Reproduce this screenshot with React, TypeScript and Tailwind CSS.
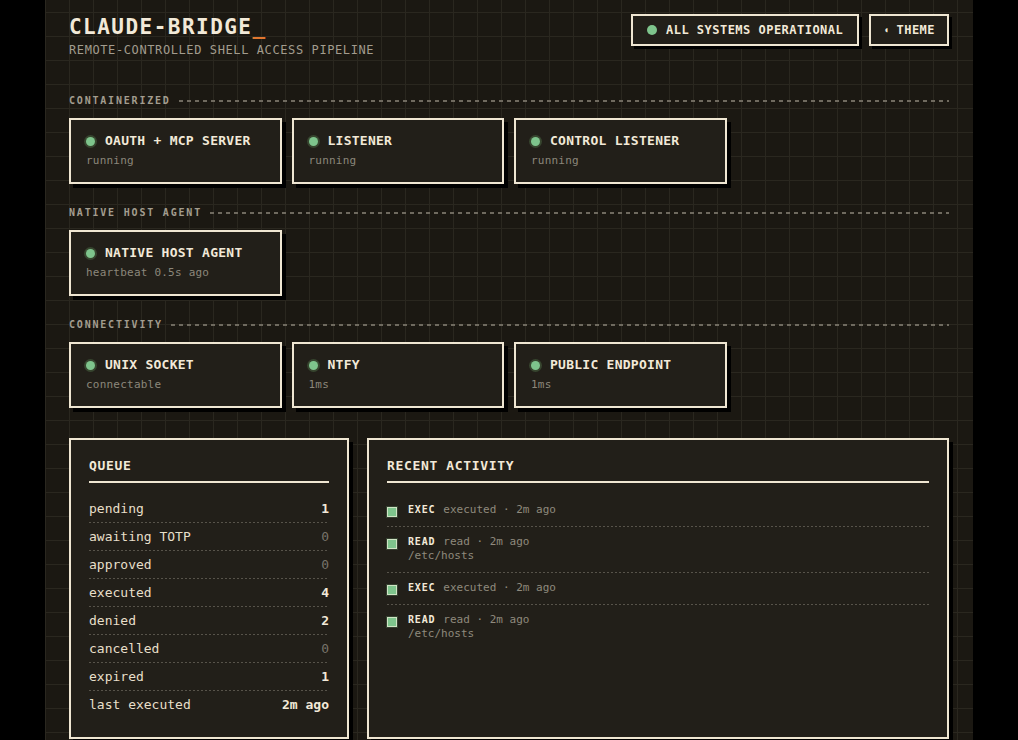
import React from 'react'

const containers = [
  { name: 'OAUTH + MCP SERVER', status: 'running' },
  { name: 'LISTENER', status: 'running' },
  { name: 'CONTROL LISTENER', status: 'running' },
]
const hostAgents = [{ name: 'NATIVE HOST AGENT', status: 'heartbeat 0.5s ago' }]
const connectivity = [
  { name: 'UNIX SOCKET', status: 'connectable' },
  { name: 'NTFY', status: '1ms' },
  { name: 'PUBLIC ENDPOINT', status: '1ms' },
]

const queue: { label: string; value: string; strong: boolean }[] = [
  { label: 'pending', value: '1', strong: true },
  { label: 'awaiting TOTP', value: '0', strong: false },
  { label: 'approved', value: '0', strong: false },
  { label: 'executed', value: '4', strong: true },
  { label: 'denied', value: '2', strong: true },
  { label: 'cancelled', value: '0', strong: false },
  { label: 'expired', value: '1', strong: true },
  { label: 'last executed', value: '2m ago', strong: true },
]

const activity = [
  { kind: 'EXEC', text: 'executed · 2m ago', path: '' },
  { kind: 'READ', text: 'read · 2m ago', path: '/etc/hosts' },
  { kind: 'EXEC', text: 'executed · 2m ago', path: '' },
  { kind: 'READ', text: 'read · 2m ago', path: '/etc/hosts' },
]

function Dotted() {
  return <div className="h-px bg-[repeating-linear-gradient(to_right,#57534a_0_2px,transparent_2px_4px)]" />
}

function Section({ title, items }: { title: string; items: { name: string; status: string }[] }) {
  return (
    <div>
      <div className="flex items-center gap-2 h-[14px] mb-[10px]">
        <span className="text-[10px] leading-[14px] font-bold tracking-[0.18em] text-[#a39d8f]">{title}</span>
        <div className="flex-1 h-[2px] bg-[repeating-linear-gradient(to_right,#6f6a5f_0_4px,transparent_4px_8px)]" />
      </div>
      <div className="grid grid-cols-4 gap-[10px]">
        {items.map((it) => (
          <div
            key={it.name}
            className="border-2 border-[#efe6d2] bg-[#221f19] shadow-[4px_4px_0_#000] px-[15px] pt-[13px] pb-[14px]"
          >
            <div className="flex items-center gap-[10px]">
              <span className="w-[9px] h-[9px] rounded-full bg-[#7ec48c] shadow-[0_0_0_2px_#37452f]" />
              <span className="text-[13px] leading-4 font-bold tracking-[0.02em] text-[#f2e9d8]">{it.name}</span>
            </div>
            <div className="mt-[5px] text-[11px] leading-[14px] tracking-[0.02em] text-[#8c877b]">{it.status}</div>
          </div>
        ))}
      </div>
    </div>
  )
}

function PanelTitle({ children }: { children: React.ReactNode }) {
  return (
    <div className="text-[13px] leading-4 font-bold tracking-[0.05em] text-[#f2e9d8] pb-[7px] border-b-2 border-[#efe6d2]">
      {children}
    </div>
  )
}

export default function App() {
  return (
    <div className="min-h-screen bg-black font-['DejaVu_Sans_Mono',monospace]">
      <div className="mx-auto w-[928px] min-h-screen bg-[#1b1812] bg-[linear-gradient(to_right,#2a271f_1px,transparent_1px),linear-gradient(to_bottom,#2a271f_1px,transparent_1px)] bg-[size:24px_24px] bg-[position:0_12px] px-6 pt-[14px]">
        {/* Header */}
        <div className="flex items-start justify-between">
          <div>
            <h1 className="text-[21px] leading-[26px] font-bold tracking-[0.07em] text-[#f2e9d8]">
              CLAUDE-BRIDGE<span className="text-[#e0762f]">_</span>
            </h1>
            <div className="mt-[2px] text-[12px] leading-4 tracking-[0.05em] text-[#a29c8e]">
              REMOTE-CONTROLLED SHELL ACCESS PIPELINE
            </div>
          </div>
          <div className="flex items-center gap-[10px]">
            <div className="h-8 flex items-center gap-[9px] px-[14px] border-2 border-[#efe6d2] bg-[#221f19] shadow-[3px_3px_0_#000]">
              <span className="w-[10px] h-[10px] rounded-full bg-[#7ec48c]" />
              <span className="text-[12px] font-bold tracking-[0.04em] text-[#f2e9d8]">ALL SYSTEMS OPERATIONAL</span>
            </div>
            <div className="h-8 flex items-center gap-[8px] pl-[13px] pr-[12px] border-2 border-[#efe6d2] bg-[#221f19] shadow-[3px_3px_0_#000]">
              <span className="text-[7px] text-[#f2e9d8]">◖</span>
              <span className="text-[12px] font-bold tracking-[0.04em] text-[#f2e9d8]">THEME</span>
            </div>
          </div>
        </div>

        <div className="mt-[36px] flex flex-col gap-[22px]">
          <Section title="CONTAINERIZED" items={containers} />
          <Section title="NATIVE HOST AGENT" items={hostAgents} />
          <Section title="CONNECTIVITY" items={connectivity} />
        </div>

        {/* Bottom panels */}
        <div className="mt-[30px] grid grid-cols-[280px_1fr] gap-[18px]">
          <div className="border-2 border-[#efe6d2] bg-[#221f19] shadow-[4px_4px_0_#000] px-[18px] pt-[18px] pb-[18px]">
            <PanelTitle>QUEUE</PanelTitle>
            <div className="mt-[12px]">
              {queue.map((q, i) => (
                <div key={q.label}>
                  <div className="h-[27px] flex items-center justify-between text-[13px] leading-[18px]">
                    <span className="text-[#e8dfca]">{q.label}</span>
                    <span className={q.strong ? 'font-bold text-[#f2e9d8]' : 'text-[#77736a]'}>{q.value}</span>
                  </div>
                  {i < queue.length - 1 ? <Dotted /> : <div className="h-px" />}
                </div>
              ))}
            </div>
          </div>

          <div className="border-2 border-[#efe6d2] bg-[#221f19] shadow-[4px_4px_0_#000] px-[18px] pt-[18px] pb-[18px]">
            <PanelTitle>RECENT ACTIVITY</PanelTitle>
            <div className="mt-[12px]">
              {activity.map((a, i) => (
                <div key={i}>
                  <div className="flex items-start gap-[11px] pt-2 pb-[9px]">
                    <span className="mt-[4px] w-[10px] h-[10px] bg-[#7ec48c] border border-[#cfe3c4] shadow-[0_0_0_1px_#34402f]" />
                    <div className="text-[11px] leading-[14px]">
                      <div>
                        <span className="text-[10px] font-bold tracking-[0.08em] text-[#f2e9d8]">{a.kind}</span>
                        <span className="ml-2 text-[#8f8a7d]">{a.text}</span>
                      </div>
                      {a.path && <div className="text-[#8f8a7d]">{a.path}</div>}
                    </div>
                  </div>
                  {i < activity.length - 1 && <Dotted />}
                </div>
              ))}
            </div>
          </div>
        </div>
      </div>
    </div>
  )
}
